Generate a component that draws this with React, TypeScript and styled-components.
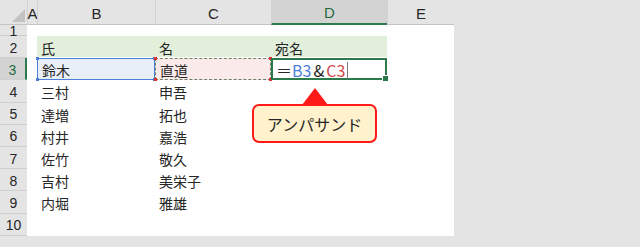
import React from 'react'
import styled, { createGlobalStyle, css } from 'styled-components'

const Global = createGlobalStyle`
  html, body { margin: 0; padding: 0; background: #e4e4e4; }
  body { width: 640px; height: 247px; overflow: hidden; }
`

const Page = styled.div`
  width: 640px;
  height: 247px;
  background: #e4e4e4;
  font-family: "Noto Sans CJK JP", "Liberation Sans", sans-serif;
`

const Sheet = styled.div`
  position: relative;
  display: grid;
  grid-template-columns: 27px 10px 118px 116px 116px 67px;
  grid-template-rows: 25px 11px repeat(9, 22.2px);
  width: 454px;
  background: #fff;
`

const Corner = styled.div`
  position: relative;
  background: #e4e4e4;
  border-bottom: 1px solid #c4c4c4;
  &::after {
    content: '';
    position: absolute;
    right: 2px;
    bottom: 2px;
    width: 0;
    height: 0;
    border-style: solid;
    border-width: 0 0 13px 13px;
    border-color: transparent transparent #c2c2c2 transparent;
  }
`

const ColHead = styled.div<{ $active?: boolean }>`
  display: flex;
  align-items: center;
  justify-content: center;
  box-sizing: border-box;
  background: #e4e4e4;
  border-left: 1px solid #d2d2d2;
  border-bottom: 1px solid #c4c4c4;
  font-family: "Liberation Sans", Arial, sans-serif;
  font-size: 15px;
  color: #262626;
  padding-top: 2px;
  ${p => p.$active && css`
    background: #d3d3d3;
    color: #1e6b3e;
    border-bottom: 2px solid #2a7a4b;
  `}
`

const RowHead = styled.div<{ $active?: boolean }>`
  display: flex;
  align-items: center;
  justify-content: center;
  box-sizing: border-box;
  background: #e4e4e4;
  border-bottom: 1px solid #cfcfcf;
  font-family: "Liberation Sans", Arial, sans-serif;
  font-size: 14px;
  color: #262626;
  overflow: visible;
  line-height: 1;
  padding-top: 2px;
  ${p => p.$active && css`
    background: #d3d3d3;
    color: #1e6b3e;
    border-right: 2px solid #2a7a4b;
  `}
`

type Tone = 'plain' | 'band' | 'blue' | 'red' | 'active'

const Cell = styled.div<{ $tone?: Tone }>`
  position: relative;
  display: flex;
  align-items: center;
  box-sizing: border-box;
  padding: 2px 0 0 4px;
  font-size: 14px;
  color: #262626;
  white-space: nowrap;
  ${p => p.$tone === 'band' && css`
    background: #e2efda;
    margin-bottom: 1px;
  `}
  ${p => p.$tone === 'blue' && css`
    background: #e9eff9;
    border: 1px solid #4b7fd6;
  `}
  ${p => p.$tone === 'red' && css`
    background: #fbeaea;
    border: 1px dashed #6f7f66;
  `}
  ${p => p.$tone === 'active' && css`
    border: 2px solid #2a7a4b;
    padding-left: 3px;
    font-size: 16px;
  `}
`

const Dot = styled.span<{ $color: string; $x: 'l' | 'r'; $y: 't' | 'b' }>`
  position: absolute;
  width: 3px;
  height: 3px;
  background: ${p => p.$color};
  ${p => (p.$x === 'l' ? 'left: -2px;' : 'right: -2px;')}
  ${p => (p.$y === 't' ? 'top: -2px;' : 'bottom: -2px;')}
`

const Handle = styled.span`
  position: absolute;
  right: -4px;
  bottom: -4px;
  width: 5px;
  height: 5px;
  background: #2a7a4b;
  border: 1px solid #fff;
`

const Ref = styled.span<{ $color?: string; $gap?: boolean }>`
  color: ${p => p.$color ?? '#262626'};
  ${p => p.$gap && 'margin: 0 2px;'}
`

const Caret = styled.span`
  display: inline-block;
  width: 1px;
  height: 17px;
  margin-left: 2px;
  background: #7a7a7a;
`

const Callout = styled.div`
  position: absolute;
  left: 252px;
  top: 104px;
  width: 125px;
  height: 39px;
  box-sizing: border-box;
  display: flex;
  align-items: center;
  justify-content: center;
  background: #fff2cc;
  border: 2px solid #ff1a1a;
  border-radius: 7px;
  font-size: 16px;
  color: #262626;
  &::before {
    content: '';
    position: absolute;
    left: 48px;
    top: -18px;
    border-style: solid;
    border-width: 0 13px 17px 13px;
    border-color: transparent transparent #ff1a1a transparent;
  }
`

const data: [string, string][] = [
  ['三村', '申吾'],
  ['達増', '拓也'],
  ['村井', '嘉浩'],
  ['佐竹', '敬久'],
  ['吉村', '美栄子'],
  ['内堀', '雅雄'],
]

const Blank = () => <Cell />

export default function App() {
  return (
    <Page>
      <Global />
      <Sheet>
        <Corner />
        <ColHead>A</ColHead>
        <ColHead>B</ColHead>
        <ColHead>C</ColHead>
        <ColHead $active>D</ColHead>
        <ColHead>E</ColHead>

        <RowHead>1</RowHead>
        <Blank /><Blank /><Blank /><Blank /><Blank />

        <RowHead>2</RowHead>
        <Blank />
        <Cell $tone="band">氏</Cell>
        <Cell $tone="band">名</Cell>
        <Cell $tone="band">宛名</Cell>
        <Blank />

        <RowHead $active>3</RowHead>
        <Blank />
        <Cell $tone="blue">
          鈴木
          <Dot $color="#4b7fd6" $x="l" $y="t" />
          <Dot $color="#4b7fd6" $x="r" $y="t" />
          <Dot $color="#4b7fd6" $x="l" $y="b" />
          <Dot $color="#4b7fd6" $x="r" $y="b" />
        </Cell>
        <Cell $tone="red">
          直道
          <Dot $color="#e03030" $x="l" $y="t" />
          <Dot $color="#e03030" $x="r" $y="t" />
          <Dot $color="#e03030" $x="l" $y="b" />
          <Dot $color="#e03030" $x="r" $y="b" />
        </Cell>
        <Cell $tone="active">
          <Ref>＝</Ref>
          <Ref $color="#4a7fd8">B3</Ref>
          <Ref $gap>&amp;</Ref>
          <Ref $color="#d0484a">C3</Ref>
          <Caret />
          <Handle />
        </Cell>
        <Blank />

        {data.map(([sei, mei], i) => (
          <React.Fragment key={sei}>
            <RowHead>{i + 4}</RowHead>
            <Blank />
            <Cell>{sei}</Cell>
            <Cell>{mei}</Cell>
            <Blank />
            <Blank />
          </React.Fragment>
        ))}

        <RowHead>10</RowHead>
        <Blank /><Blank /><Blank /><Blank /><Blank />

        <Callout>アンパサンド</Callout>
      </Sheet>
    </Page>
  )
}
